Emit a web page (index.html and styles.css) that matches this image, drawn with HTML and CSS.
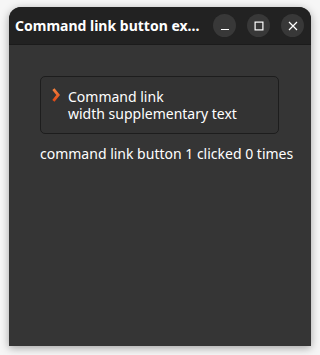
FILE: index.html
```html
<!DOCTYPE html>
<html>
<head>
<meta charset="utf-8">
<link rel="stylesheet" href="styles.css">
</head>
<body>
<div class="window">
  <div class="titlebar">
    <div class="title">Command link button ex...</div>
    <div class="controls">
      <div class="ctl"><svg width="10" height="10" viewBox="0 0 10 10"><path d="M1 8.5H9" stroke="#fff" stroke-width="1.2"/></svg></div>
      <div class="ctl"><svg width="10" height="10" viewBox="0 0 10 10"><rect x="1.1" y="1.1" width="7.8" height="7.8" fill="none" stroke="#fff" stroke-width="1.2"/></svg></div>
      <div class="ctl"><svg width="10" height="10" viewBox="0 0 10 10"><path d="M1 1L9 9M9 1L1 9" stroke="#fff" stroke-width="1.2"/></svg></div>
    </div>
  </div>
  <div class="content">
    <div class="cmdlink">
      <svg class="chev" width="8" height="14" viewBox="0 0 8 14"><defs><linearGradient id="g" x1="0" y1="0" x2="0" y2="1"><stop offset="0" stop-color="#f4813f"/><stop offset="1" stop-color="#df4a17"/></linearGradient></defs><path d="M1.4 1.2L6.2 7L1.4 12.8" fill="none" stroke="url(#g)" stroke-width="2.8"/></svg>
      <div class="cmdtext">
        <div class="line">Command link</div>
        <div class="line">width supplementary text</div>
      </div>
    </div>
    <div class="label">command link button 1 clicked 0 times</div>
  </div>
</div>
</body>
</html>
```
FILE: styles.css
```css
html, body { margin: 0; padding: 0; }
body {
  width: 320px; height: 355px;
  background: #f6f6f6;
  font-family: "Noto Sans", "DejaVu Sans", sans-serif;
  overflow: hidden;
}
.window {
  margin: 7px 0 0 9px;
  width: 302px; height: 339px;
  background: #353535;
  border-radius: 12px 12px 0 0;
  box-shadow: 0 2px 8px rgba(0,0,0,0.35);
  display: flex; flex-direction: column;
  overflow: hidden;
}
.titlebar {
  height: 37px;
  background: #222222;
  border-bottom: 1px solid #1b1b1b;
  display: flex; align-items: center;
  padding: 0 7px 0 6px;
}
.title {
  flex: 1;
  color: #ffffff;
  font-weight: bold;
  font-size: 14px;
  white-space: nowrap;
}
.controls { display: flex; gap: 11px; }
.ctl {
  width: 23px; height: 23px;
  border-radius: 50%;
  background: #383838;
  display: flex; align-items: center; justify-content: center;
}
.content { padding: 31px 0 0 31px; }
.cmdlink {
  width: 239px; height: 58px;
  box-sizing: border-box;
  border: 1px solid #1d1d1d;
  border-radius: 5px;
  background: #333333;
  display: flex; align-items: flex-start;
  padding: 0 0 0 11px;
}
.chev { margin-top: 11px; flex: none; }
.cmdtext {
  margin: 12px 0 0 8px;
  color: #ffffff;
  font-size: 14px;
  white-space: nowrap;
}
.line { height: 17px; line-height: 15px; }
.label {
  margin-top: 10px;
  color: #ffffff;
  font-size: 14px;
  line-height: 19px;
}
```
